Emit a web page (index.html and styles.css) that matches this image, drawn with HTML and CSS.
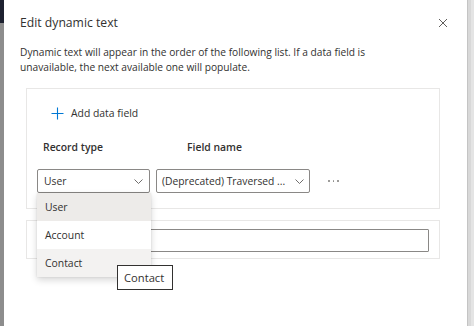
FILE: index.html
```html
<!DOCTYPE html>
<html lang="en">
<head>
<meta charset="utf-8">
<title>Edit dynamic text</title>
<link rel="stylesheet" href="styles.css">
</head>
<body>
<div class="page">
  <div class="edge-left"><div class="edge-left-top"></div></div>
  <div class="dialog">
    <div class="header">
      <h1 class="title">Edit dynamic text</h1>
      <button class="close" aria-label="Close">
        <svg width="10" height="10" viewBox="0 0 10 10"><path d="M1 1L9 9M9 1L1 9" stroke="#605e5c" stroke-width="1" fill="none"/></svg>
      </button>
    </div>
    <p class="desc">Dynamic text will appear in the order of the following list. If a data field is unavailable, the next available one will populate.</p>
    <section class="card card-fields">
      <button class="add">
        <svg class="plus" width="13" height="13" viewBox="0 0 13 13"><path d="M6.5 0.5V12.5M0.5 6.5H12.5" stroke="#0078d4" stroke-width="1.1" fill="none"/></svg>
        <span>Add data field</span>
      </button>
      <div class="labels">
        <span class="label label-record">Record type</span>
        <span class="label">Field name</span>
      </div>
      <div class="row">
        <div class="dropdown dd-record">
          <span class="dd-text">User</span>
          <svg class="chev" width="9" height="5" viewBox="0 0 9 5"><path d="M0.5 0.5L4.5 4.5L8.5 0.5" stroke="#605e5c" stroke-width="0.9" fill="none"/></svg>
          <ul class="menu">
            <li class="item item-selected">User</li>
            <li class="item">Account</li>
            <li class="item item-hover">Contact</li>
          </ul>
        </div>
        <div class="dropdown dd-field">
          <span class="dd-text">(Deprecated) Traversed ...</span>
          <svg class="chev" width="9" height="5" viewBox="0 0 9 5"><path d="M0.5 0.5L4.5 4.5L8.5 0.5" stroke="#605e5c" stroke-width="0.9" fill="none"/></svg>
        </div>
        <button class="more" aria-label="More"><i></i><i></i><i></i></button>
      </div>
    </section>
    <section class="card card-text">
      <div class="text-input"></div>
    </section>
    <div class="tooltip">Contact</div>
  </div>
  <div class="edge-right"></div>
</div>
</body>
</html>
```
FILE: styles.css
```css
* { box-sizing: border-box; }
html, body { margin: 0; padding: 0; }
body {
  width: 474px;
  height: 326px;
  overflow: hidden;
  font-family: "Open Sans", "Noto Sans", sans-serif;
  color: #323130;
  background: #ffffff;
}
.page {
  display: flex;
  height: 326px;
}
.edge-left {
  width: 4px;
  flex: none;
  background: #8d8d8d;
}
.edge-left-top {
  height: 23px;
  background: #1d2130;
}
.edge-right {
  width: 7px;
  flex: none;
  background: #d8d8d8;
  border-left: 1px solid #c4c4c4;
  box-shadow: inset -3px 0 0 #e4e4e4;
}
.dialog {
  position: relative;
  flex: 1;
  background: #ffffff;
  padding: 15px 16px 0 16px;
}
.header {
  display: flex;
  align-items: center;
  justify-content: space-between;
  height: 16px;
}
.title {
  margin: 0;
  font-size: 12.2px;
  font-weight: 400;
  line-height: 16px;
  color: #323130;
}
.close {
  width: 16px;
  height: 16px;
  padding: 0;
  border: 0;
  background: none;
  display: flex;
  align-items: center;
  justify-content: center;
}
.desc {
  margin: 14px 0 0 0;
  font-size: 10.2px;
  line-height: 14.5px;
  width: 390px;
}
.card {
  margin: 0 11px 0 6px;
  border: 1px solid #e8e7e6;
  padding: 0 10px;
}
.card-fields {
  margin-top: 14px;
  padding-top: 17px;
  padding-bottom: 15px;
}
.add {
  display: flex;
  align-items: center;
  gap: 7px;
  margin-left: 14px;
  padding: 0;
  border: 0;
  background: none;
  font-family: inherit;
  font-size: 10.4px;
  line-height: 14px;
  color: #323130;
}
.labels {
  display: flex;
  margin-top: 20px;
  padding-left: 6px;
  font-size: 10.4px;
  line-height: 14px;
  font-weight: 600;
}
.label-record {
  width: 144px;
}
.row {
  display: flex;
  align-items: center;
  gap: 6px;
  margin-top: 15px;
}
.dropdown {
  position: relative;
  height: 24px;
  border: 1px solid #8a8886;
  border-radius: 2px;
  display: flex;
  align-items: center;
  justify-content: space-between;
  font-size: 10.3px;
}
.dd-record {
  width: 113px;
  padding: 0 6px 0 6px;
}
.dd-field {
  width: 154px;
  padding: 0 5px 0 5px;
}
.dd-text {
  white-space: nowrap;
}
.more {
  margin-left: 12px;
  display: flex;
  gap: 3px;
  padding: 0;
  border: 0;
  background: none;
}
.more i {
  width: 1.6px;
  height: 1.6px;
  border-radius: 50%;
  background: #8a8886;
}
.menu {
  position: absolute;
  left: -1px;
  top: 23px;
  width: 114px;
  margin: 0;
  padding: 0;
  list-style: none;
  background: #ffffff;
  box-shadow: 0 3px 7px rgba(0,0,0,0.16), 0 0 2px rgba(0,0,0,0.1);
  z-index: 2;
}
.item {
  height: 28px;
  padding-left: 8px;
  display: flex;
  align-items: center;
  font-size: 10.4px;
}
.item-selected { background: #edebe9; }
.item-hover { background: #f3f2f1; }
.card-text {
  margin-top: 11px;
  padding-top: 8px;
  padding-bottom: 6px;
}
.text-input {
  height: 23px;
  border: 1px solid #8a8886;
  border-radius: 1px;
}
.tooltip {
  position: absolute;
  left: 113px;
  top: 265px;
  z-index: 3;
  height: 25px;
  width: 56px;
  padding: 0 6px;
  display: flex;
  align-items: center;
  background: #ffffff;
  border: 1px solid #323130;
  font-size: 11.2px;
}
```
